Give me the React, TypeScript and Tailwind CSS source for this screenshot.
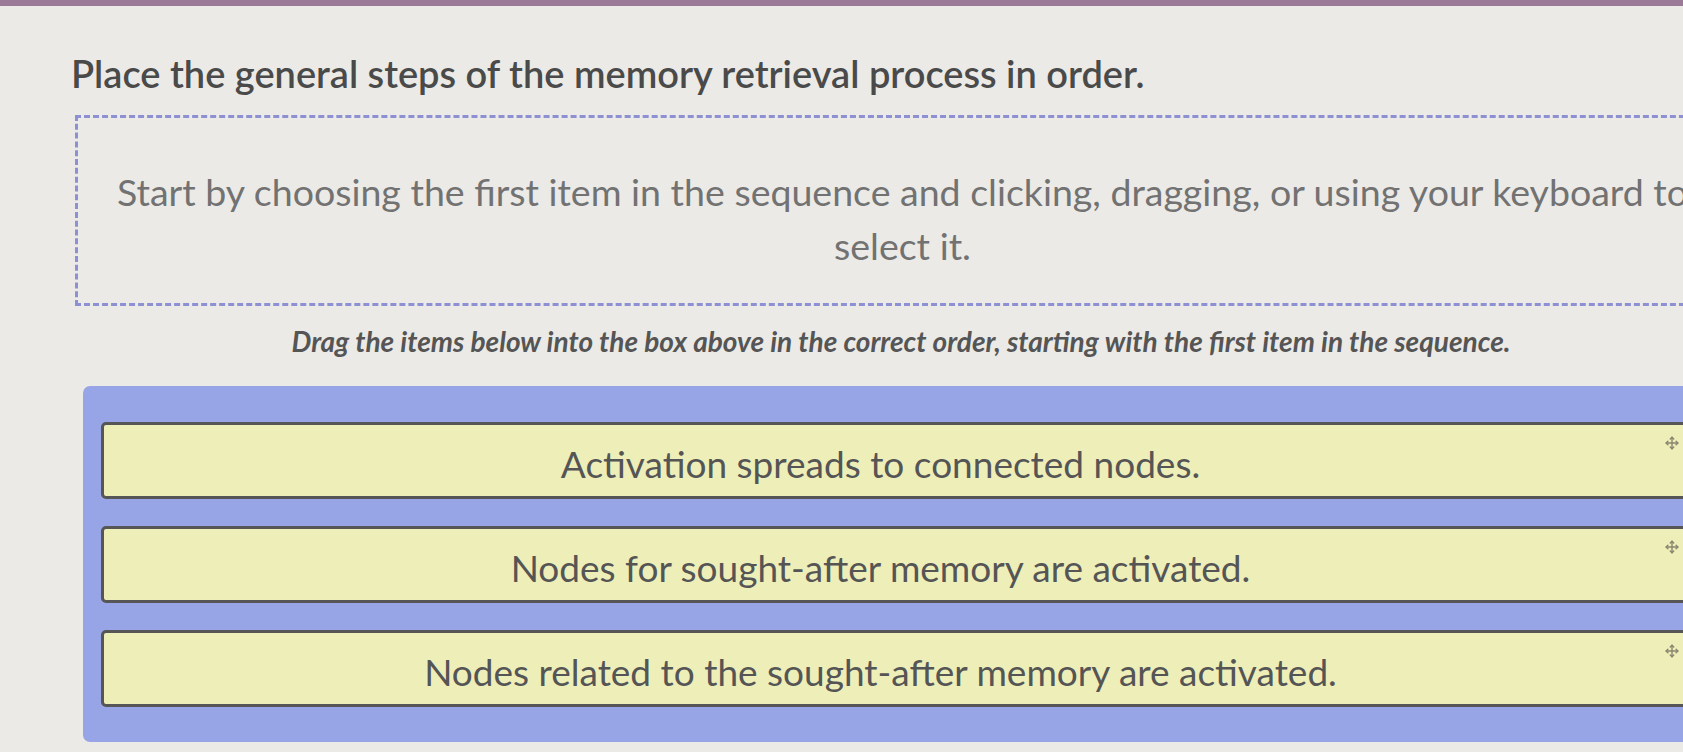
import { Move } from "lucide-react";

const steps = [
  "Activation spreads to connected nodes.",
  "Nodes for sought-after memory are activated.",
  "Nodes related to the sought-after memory are activated.",
];

function StepCard({ label }: { label: string }) {
  return (
    <div className="relative h-[77px] w-full rounded-[5px] border-[3px] border-[#565656] bg-[#eeeeb9] flex items-center justify-center pr-[40px] pt-[6px]">
      <span className="text-[37px] text-[#555555] font-normal">{label}</span>
      <Move className="absolute right-[18px] top-[11px] w-[14px] h-[14px] text-[#86866f]" strokeWidth={2.4} />
    </div>
  );
}

export default function App() {
  return (
    <div
      className="h-screen w-full overflow-hidden bg-[#ebeae6]"
      style={{ fontFamily: "Lato, 'Open Sans', sans-serif" }}
    >
      <div className="h-[6px] w-full bg-[#9b7a98]" />
      <div className="w-[1730px] pl-[71px]">
        <h1 className="mt-[45px] text-[38px] leading-[44px] font-semibold text-[#4a4a4a]">
          Place the general steps of the memory retrieval process in order.
        </h1>

        <div className="mt-[20px] ml-[4px] h-[191px] border-[3px] border-dashed border-[#8e90d4] pt-[47px] px-[14px] text-center">
          <p className="text-[37.5px] leading-[54px] font-normal text-[#727272]">
            Start by choosing the first item in the sequence and clicking, dragging, or using your keyboard to select it.
          </p>
        </div>

        <p className="mt-[18px] text-center text-[28px] leading-[34px] font-bold italic text-[#555555] w-[1660px]">
          Drag the items below into the box above in the correct order, starting with the first item in the sequence.
        </p>

        <div className="mt-[28px] ml-[12px] h-[356px] rounded-[7px] bg-[#97a5e7] pl-[18px] pr-[30px] pt-[36px] flex flex-col gap-[27px]">
          {steps.map((s) => (
            <StepCard key={s} label={s} />
          ))}
        </div>
      </div>
    </div>
  );
}
